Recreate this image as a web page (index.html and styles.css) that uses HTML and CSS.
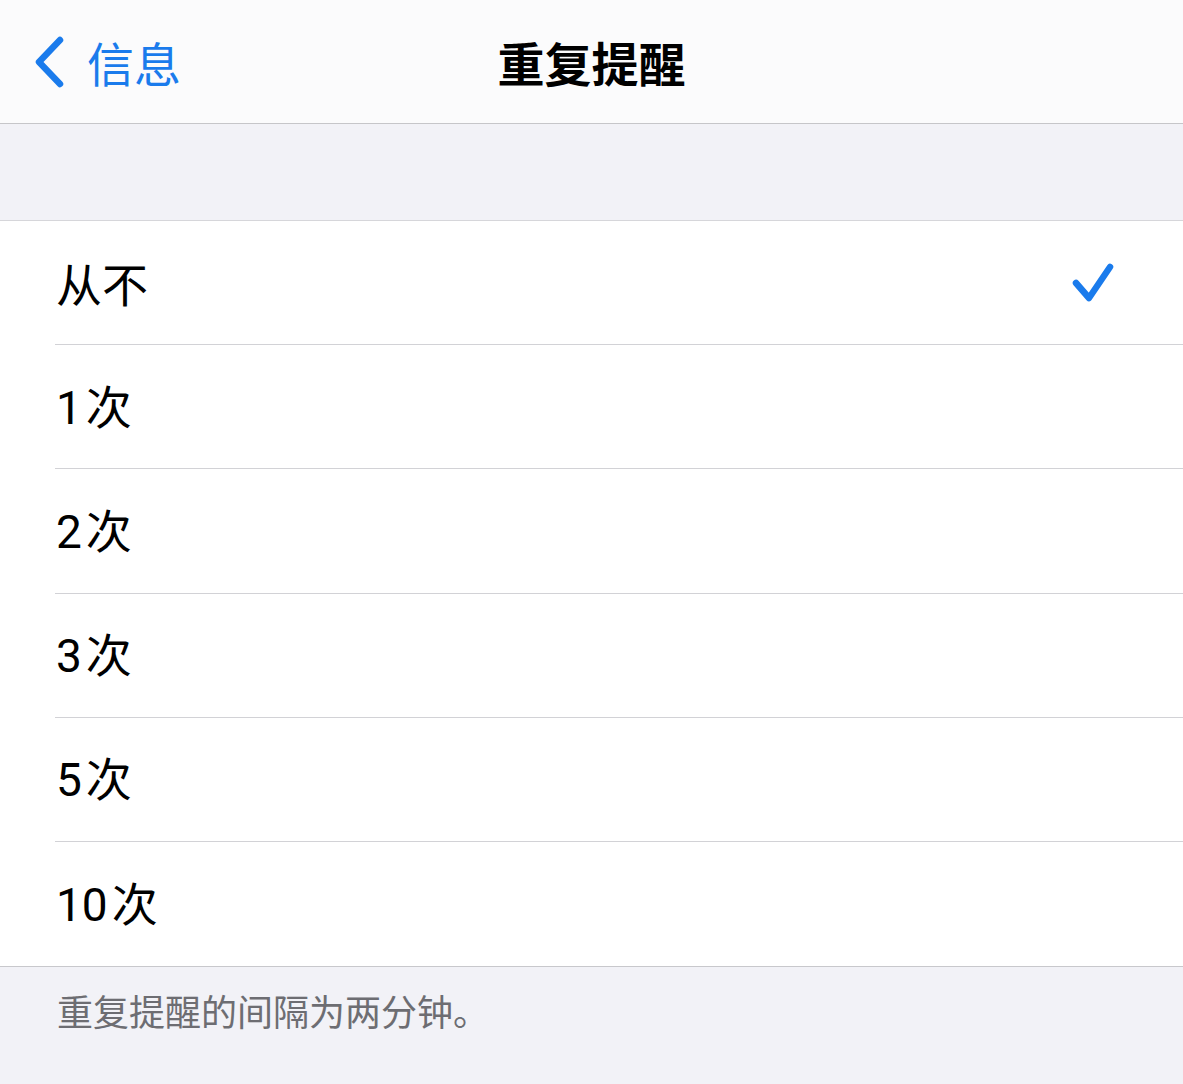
FILE: index.html
```html
<!doctype html>
<html lang="zh-CN">
  <head>
    <meta charset="UTF-8" />
    <meta name="viewport" content="width=device-width, initial-scale=1.0" />
    <title>重复提醒</title>
    <link rel="stylesheet" href="styles.css">
  </head>
  <body>
    <header class="nav-bar">
      <a class="back" href="#">
        <svg class="back-icon" width="40" height="56" viewBox="0 0 40 56">
          <path d="M30 6 L9 28 L30 50" fill="none" stroke="#1a7bec" stroke-width="6.5" stroke-linecap="round" stroke-linejoin="round" />
        </svg>
        <span>信息</span>
      </a>
      <h1 class="nav-title">重复提醒</h1>
    </header>

    <div class="section-gap"></div>

    <ul class="option-list">
      <li class="option-row">
        <span>从不</span>
        <svg class="check" width="48" height="44" viewBox="0 0 48 44">
          <path d="M7 22 L20 37 L41 6" fill="none" stroke="#1a7bec" stroke-width="6.5" stroke-linecap="round" stroke-linejoin="round" />
        </svg>
      </li>
      <li class="option-row"><span><span class="num">1</span>次</span></li>
      <li class="option-row"><span><span class="num">2</span>次</span></li>
      <li class="option-row"><span><span class="num">3</span>次</span></li>
      <li class="option-row"><span><span class="num">5</span>次</span></li>
      <li class="option-row"><span><span class="num">10</span>次</span></li>
    </ul>

    <p class="footer-note">重复提醒的间隔为两分钟。</p>
  </body>
</html>
```

FILE: styles.css
```css
body {
  margin: 0;
  background-color: #f2f2f7;
  font-family: "Noto Sans CJK SC", "Noto Sans", sans-serif;
  color: #000;
}
.nav-bar {
  position: relative;
  height: 124px;
  box-sizing: border-box;
  background-color: #fbfbfc;
  border-bottom: 1px solid #c6c6c9;
  display: flex;
  align-items: center;
  justify-content: center;
}
.back {
  position: absolute;
  left: 30px;
  top: 34px;
  display: flex;
  align-items: center;
  gap: 17px;
  color: #1a7bec;
  text-decoration: none;
  font-size: 47px;
  line-height: 56px;
}
.back-icon {
  display: block;
}
.nav-title {
  margin: 0;
  font-size: 47px;
  font-weight: 700;
  line-height: 1;
}
.section-gap {
  height: 96px;
  border-bottom: 1px solid #d6d6da;
}
.option-list {
  list-style: none;
  margin: 0;
  padding: 0 0 0 55px;
  background-color: #fff;
  border-bottom: 1px solid #c8c8cc;
}
.option-row {
  height: 124.2px;
  box-sizing: border-box;
  display: flex;
  align-items: center;
  justify-content: space-between;
  padding: 0 66px 0 1px;
  border-bottom: 1px solid #d2d2d6;
  font-size: 46px;
  line-height: 1;
}
.option-row:last-child {
  border-bottom: none;
}
.option-row > span {
  margin-top: -2px;
}
.num {
  font-family: Roboto, "Noto Sans", sans-serif;
  margin-right: 4px;
}
.check {
  display: block;
  margin-top: 0;
}
.footer-note {
  margin: 0;
  padding: 20px 0 0 57px;
  font-size: 36px;
  line-height: 46px;
  color: #6d6d72;
}
```
